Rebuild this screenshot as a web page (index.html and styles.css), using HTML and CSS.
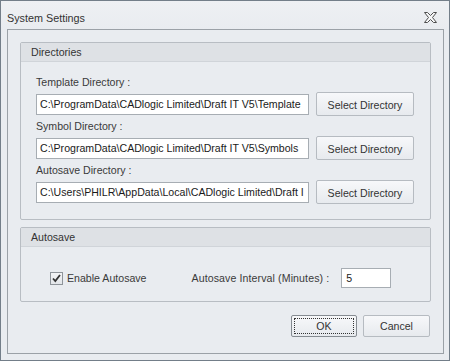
FILE: index.html
```html
<!DOCTYPE html>
<html>
<head>
<meta charset="utf-8">
<link rel="stylesheet" href="styles.css">
</head>
<body>
<div class="window">
  <div class="titlebar">
    <span class="title">System Settings</span>
    <svg class="close" width="13" height="11" viewBox="0 0 13 11">
      <polygon points="0.5,0.5 3.5,0.5 6.5,3.5 9.5,0.5 12.5,0.5 8.5,5.5 12.5,10.5 9.5,10.5 6.5,7.5 3.5,10.5 0.5,10.5 4.5,5.5" fill="#f6f7f8" stroke="#4e4e4e" stroke-width="1"/>
    </svg>
  </div>
  <div class="panel">
    <div class="group">
      <div class="group-header">Directories</div>
      <div class="group-body dirs">
        <div class="label">Template Directory :</div>
        <div class="row">
          <div class="input">C:\ProgramData\CADlogic Limited\Draft IT V5\Template</div>
          <div class="btn sel">Select Directory</div>
        </div>
        <div class="label">Symbol Directory :</div>
        <div class="row">
          <div class="input">C:\ProgramData\CADlogic Limited\Draft IT V5\Symbols</div>
          <div class="btn sel">Select Directory</div>
        </div>
        <div class="label">Autosave Directory :</div>
        <div class="row">
          <div class="input">C:\Users\PHILR\AppData\Local\CADlogic Limited\Draft I</div>
          <div class="btn sel">Select Directory</div>
        </div>
      </div>
    </div>
    <div class="group auto">
      <div class="group-header">Autosave</div>
      <div class="group-body autobody">
        <span class="check">
          <svg width="11" height="11" viewBox="0 0 11 11"><path d="M2 5.5 L4.3 8 L9 2" fill="none" stroke="#333" stroke-width="1.8"/></svg>
        </span>
        <span class="check-label">Enable Autosave</span>
        <span class="interval-label">Autosave Interval (Minutes) :</span>
        <div class="input small">5</div>
      </div>
    </div>
    <div class="footer">
      <div class="btn ok"><span class="focus">OK</span></div>
      <div class="btn cancel">Cancel</div>
    </div>
  </div>
</div>
</body>
</html>
```
FILE: styles.css
```css
* { box-sizing: border-box; }
html, body { margin: 0; padding: 0; }
body {
  font-family: "Liberation Sans", Arial, sans-serif;
  font-size: 10.6px;
  color: #3a3a3a;
  background: #e9ecf0;
}
.window {
  width: 450px;
  height: 361px;
  border: 1px solid #737e89;
  background: #e9ecf0;
  display: flex;
  flex-direction: column;
}
.titlebar {
  height: 28px;
  display: flex;
  align-items: center;
  justify-content: space-between;
  padding: 5px 12px 0 6px;
  background: linear-gradient(#eef0f3, #e9ecf0);
}
.title { font-size: 10.8px; color: #333; }
.close { display: block; margin-top: -1px; }
.panel {
  flex: 1;
  margin: 0 5px 6px 6px;
  border: 1px solid #9ba1a7;
  padding: 12px 12px 0 12px;
  display: flex;
  flex-direction: column;
}
.group {
  border: 1px solid #b8bdc3;
  border-radius: 2px;
  background: #e9ecf0;
}
.group.auto { margin-top: 7px; }
.group-header {
  height: 19px;
  line-height: 18px;
  padding-left: 10px;
  background: #dee1e5;
  border-bottom: 1px solid #d0d4d9;
  color: #333;
}
.dirs {
  padding: 13px 15px 15px 15px;
  display: flex;
  flex-direction: column;
}
.label {
  height: 14px;
  line-height: 14px;
  margin-bottom: 3px;
}
.row {
  height: 24px;
  display: flex;
  align-items: center;
  gap: 7px;
  margin-bottom: 3px;
}
.row:last-child { margin-bottom: 0; }
.input {
  width: 273px;
  flex: none;
  height: 21px;
  line-height: 19px;
  border: 1px solid #a7adb3;
  background: #ffffff;
  color: #1a1a1a;
  padding-left: 3px;
  white-space: nowrap;
  overflow: hidden;
}
.btn {
  border: 1px solid #b6bbc1;
  border-radius: 2px;
  background: linear-gradient(#f7f8fa, #e7eaee);
  color: #333;
  text-align: center;
  display: flex;
  align-items: center;
  justify-content: center;
  flex: none;
}
.sel { width: 98px; height: 24px; padding-top: 1px; }
.autobody {
  display: flex;
  align-items: center;
  padding: 20px 0 13px 29px;
  height: 54px;
}
.check {
  width: 13px;
  height: 13px;
  border: 1px solid #8e949a;
  background: linear-gradient(#f2f3f5, #e3e6ea);
  display: flex;
  align-items: center;
  justify-content: center;
  margin-top: 1px;
}
.check svg { display: block; }
.check-label { margin-left: 4px; }
.interval-label { margin-left: 45px; letter-spacing: 0.1px; }
.input.small {
  width: 50px;
  height: 20px;
  margin-left: 12px;
  padding-left: 4px;
}
.footer {
  display: flex;
  justify-content: flex-end;
  gap: 6px;
  margin-top: 13px;
  padding-right: 1px;
}
.ok, .cancel { height: 22px; }
.ok { width: 66px; border-color: #858b91; padding: 2px; }
.cancel { width: 67px; }
.focus {
  flex: 1;
  align-self: stretch;
  border: 1px dotted #333;
  display: flex;
  align-items: center;
  justify-content: center;
}
```
